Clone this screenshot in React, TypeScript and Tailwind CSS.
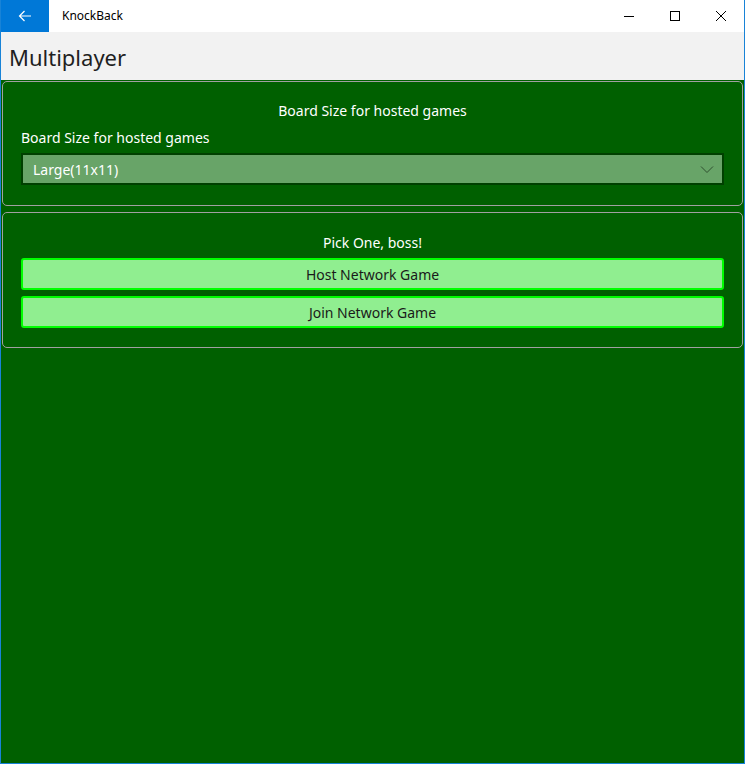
// KnockBack — Multiplayer 화면 재현.

const font = { fontFamily: '"Noto Sans", "Open Sans", sans-serif' };

function TitleBar() {
  return (
    <div className="flex h-[32px] items-stretch bg-white">
      <div className="flex w-[48px] items-center justify-center bg-[#0078d7]">
        <svg width="16" height="16" viewBox="0 0 16 16" fill="none" stroke="white" strokeWidth="1.2">
          <path d="M14 8H2.5M7.5 3L2.5 8l5 5" />
        </svg>
      </div>
      <div className="flex items-center pl-[13px] text-[12px] text-black">KnockBack</div>
      <div className="ml-auto flex">
        <div className="flex w-[46px] items-center justify-center">
          <svg width="10" height="10" viewBox="0 0 10 10" stroke="black" strokeWidth="1">
            <path d="M0 5.5h10" />
          </svg>
        </div>
        <div className="flex w-[46px] items-center justify-center">
          <svg width="10" height="10" viewBox="0 0 10 10" fill="none" stroke="black" strokeWidth="1">
            <rect x="0.5" y="0.5" width="9" height="9" />
          </svg>
        </div>
        <div className="flex w-[46px] items-center justify-center">
          <svg width="10" height="10" viewBox="0 0 10 10" stroke="black" strokeWidth="1">
            <path d="M0 0l10 10M10 0L0 10" />
          </svg>
        </div>
      </div>
    </div>
  );
}

export default function App() {
  return (
    <div
      className="flex h-[764px] w-[745px] flex-col overflow-hidden border-x border-b border-[#1883d7]"
      style={font}
    >
      <TitleBar />
      <div className="flex h-[48px] items-center bg-[#f2f2f2] pl-[8px] pt-[2px] text-[22px] text-[#1f1f1f]">
        Multiplayer
      </div>
      <div className="flex flex-1 flex-col gap-[6px] bg-[#006000] p-px">
        {/* 보드 크기 */}
        <section className="flex flex-col rounded-[5px] border border-[#a0a0a0] px-[18px] pt-[19px] pb-[20px]">
          <p className="text-center text-[14px] leading-[20px] text-white">Board Size for hosted games</p>
          <p className="mt-[7px] text-[14px] leading-[20px] text-white">Board Size for hosted games</p>
          <div className="mt-[5px] flex h-[32px] items-center justify-between border-2 border-[#004000] bg-[#68a468] pl-[10px] pr-[8px]">
            <span className="text-[14px] text-white">Large(11x11)</span>
            <svg width="14" height="10" viewBox="0 0 14 10" fill="none" stroke="#2f4f2f" strokeWidth="1">
              <path d="M1 2.5l6 6 6-6" />
            </svg>
          </div>
        </section>
        {/* 게임 선택 */}
        <section className="flex flex-col rounded-[5px] border border-[#a0a0a0] px-[18px] pt-[20px] pb-[19px]">
          <p className="text-center text-[14px] leading-[20px] text-white">Pick One, boss!</p>
          <div className="mt-[5px] flex flex-col gap-[6px]">
            <button className="h-[32px] rounded-[3px] border-2 border-[#00ff00] bg-[#90ee90] text-[14px] text-[#1a1a1a]">
              Host Network Game
            </button>
            <button className="h-[32px] rounded-[3px] border-2 border-[#00ff00] bg-[#90ee90] text-[14px] text-[#1a1a1a]">
              Join Network Game
            </button>
          </div>
        </section>
      </div>
    </div>
  );
}
